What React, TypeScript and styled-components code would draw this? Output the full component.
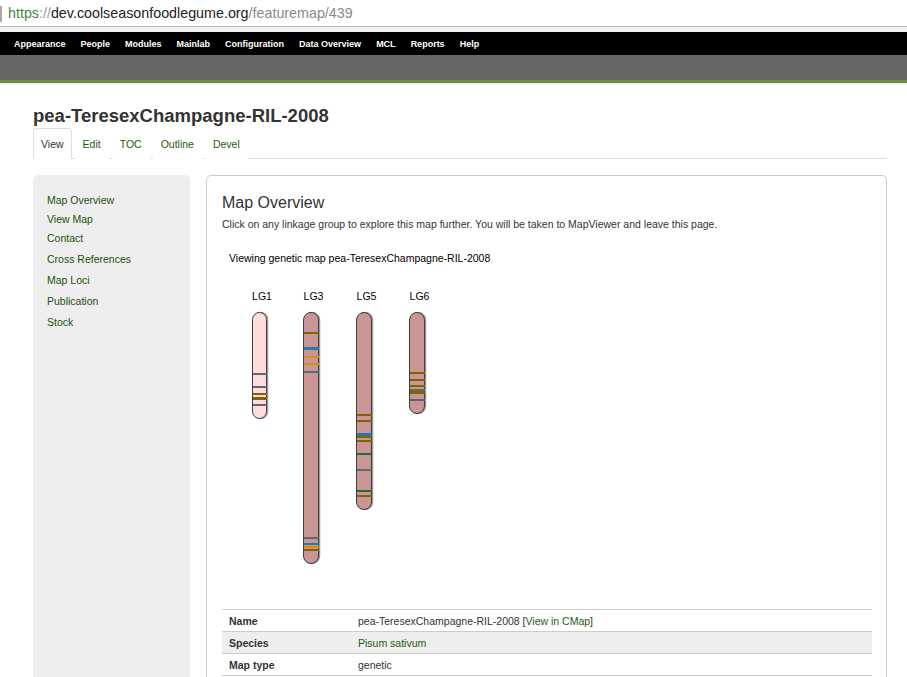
import React from "react";
import styled, { createGlobalStyle } from "styled-components";

const Global = createGlobalStyle`
  html, body { margin: 0; padding: 0; background: #fff; }
  body { font-family: "Liberation Sans", Arial, sans-serif; color: #333; }
`;

const UrlBar = styled.div`
  height: 26px;
  display: flex;
  align-items: center;
  border-bottom: 1px solid #b8b8b8;
  font-size: 14.3px;
  position: relative;
  padding-left: 8px;
  white-space: nowrap;
`;
const Caret = styled.span`
  position: absolute;
  left: 0;
  top: 6px;
  width: 2px;
  height: 16px;
  background: #aaa;
`;
const UrlPart = styled.span<{ $c: string }>`
  color: ${(p) => p.$c};
`;
const Spacer = styled.div`
  height: 5px;
  background: #f1f1f1;
`;
const NavBar = styled.nav`
  height: 23px;
  background: #000;
  display: flex;
  align-items: center;
  gap: 15px;
  padding-left: 14px;
`;
const NavItem = styled.span`
  color: #fff;
  font-weight: bold;
  font-size: 9px;
`;
const GrayBand = styled.div`
  height: 25px;
  background: #666;
  border-bottom: 3px solid #738a43;
`;
const FaintLine = styled.div`
  height: 1px;
  background: #e6e6e6;
`;
const Page = styled.div`
  padding: 0 20px 0 33px;
`;
const Title = styled.h1`
  margin: 0;
  padding-top: 20px;
  height: 23px;
  font-size: 18.5px;
  line-height: 23px;
  font-weight: bold;
  color: #333;
`;
const Tabs = styled.div`
  margin-top: 1px;
  display: flex;
  border-bottom: 1px solid #ddd;
  height: 30px;
`;
const Tab = styled.a<{ $active?: boolean }>`
  display: flex;
  align-items: center;
  padding: 0 7px;
  margin-right: 3px;
  font-size: 10.5px;
  color: ${(p) => (p.$active ? "#333" : "#1f5a10")};
  border: 1px solid ${(p) => (p.$active ? "#ddd" : "transparent")};
  border-bottom: none;
  border-radius: 4px 4px 0 0;
  background: #fff;
  height: 31px;
  box-sizing: border-box;
  text-decoration: none;
`;
const Body = styled.div`
  display: flex;
  gap: 16px;
  margin-top: 16px;
  align-items: flex-start;
`;
const Sidebar = styled.aside`
  width: 157px;
  flex-shrink: 0;
  background: #eee;
  border-radius: 5px 5px 0 0;
  height: 520px;
  padding: 16px 0 0 14px;
  box-sizing: border-box;
`;
const SideLink = styled.a<{ $spaced?: boolean }>`
  display: block;
  font-size: 10.5px;
  line-height: 19px;
  margin-top: ${(p) => (p.$spaced ? "2px" : "0")};
  color: #254f0d;
  text-decoration: none;
`;
const Panel = styled.section`
  flex: 1;
  border: 1px solid #ccc;
  border-radius: 5px;
  padding: 17px 14px 0 15px;
  min-height: 520px;
  box-sizing: border-box;
`;
const PanelTitle = styled.h2`
  margin: 0;
  font-size: 16px;
  line-height: 19px;
  font-weight: normal;
  color: #333;
`;
const Desc = styled.p`
  margin: 5px 0 0;
  font-size: 10.5px;
  line-height: 14px;
  color: #333;
`;
const Viewing = styled.p`
  margin: 20px 0 0 7px;
  font-size: 10.5px;
  line-height: 14px;
  color: #000;
`;
const MapSvg = styled.svg`
  display: block;
  margin: 26px 0 0 7px;
`;
const Table = styled.table`
  margin-top: 43px;
  width: 100%;
  border-collapse: collapse;
  font-size: 10.5px;
`;
const Row = styled.tr<{ $shade?: boolean }>`
  background: ${(p) => (p.$shade ? "#eee" : "#fff")};
  border-top: 1px solid #ccc;
  border-bottom: 1px solid #ccc;
`;
const Th = styled.th`
  text-align: left;
  font-weight: bold;
  color: #333;
  width: 115px;
  padding: 0 7px;
  height: 21px;
`;
const Td = styled.td`
  color: #333;
  padding: 0 7px;
`;
const Link = styled.a`
  color: #1f5a10;
  text-decoration: none;
`;

const C = {
  olive: "#7e6500",
  blue: "#2878a6",
  orange: "#d98b14",
  gray: "#5d6877",
  green: "#246a40",
};

type Band = { y: number; c: string; h?: number };
type Chrom = { name: string; x: number; w: number; top: number; bottom: number; fill: string; bands: Band[] };

const chroms: Chrom[] = [
  {
    name: "LG1", x: 23, w: 14, top: 21, bottom: 127, fill: "#fedcdc",
    bands: [
      { y: 83, c: C.gray }, { y: 96, c: C.gray }, { y: 103, c: C.olive },
      { y: 107, c: C.olive, h: 3 }, { y: 114, c: C.gray },
    ],
  },
  {
    name: "LG3", x: 74, w: 15, top: 21, bottom: 272, fill: "#c99595",
    bands: [
      { y: 42, c: C.olive }, { y: 57, c: C.blue, h: 3 }, { y: 66, c: C.orange },
      { y: 73, c: C.orange }, { y: 81, c: C.gray }, { y: 247, c: C.gray },
      { y: 253, c: C.blue }, { y: 256, c: C.orange }, { y: 259, c: C.olive },
    ],
  },
  {
    name: "LG5", x: 127, w: 15, top: 21, bottom: 218, fill: "#c99595",
    bands: [
      { y: 124, c: C.olive }, { y: 130, c: C.olive }, { y: 143, c: C.blue, h: 3 },
      { y: 146, c: C.olive }, { y: 150, c: C.olive }, { y: 163, c: C.green },
      { y: 179, c: C.gray }, { y: 200, c: C.green }, { y: 205, c: C.olive },
    ],
  },
  {
    name: "LG6", x: 180, w: 15, top: 21, bottom: 122, fill: "#c99595",
    bands: [
      { y: 82, c: C.olive }, { y: 89, c: C.olive }, { y: 95, c: C.olive },
      { y: 99, c: C.gray }, { y: 101, c: C.olive, h: 3 }, { y: 109, c: C.gray },
    ],
  },
];

function GeneticMap() {
  return (
    <MapSvg width={220} height={275} viewBox="0 0 220 275">
      {chroms.map((ch) => {
        const h = ch.bottom - ch.top;
        const r = ch.w / 2;
        return (
          <g key={ch.name}>
            <text
              x={ch.x + r + 3}
              y={9}
              textAnchor="middle"
              fontSize={10.5}
              fill="#000"
              fontFamily="Liberation Sans, Arial, sans-serif"
            >
              {ch.name}
            </text>
            <rect x={ch.x + 1.5} y={ch.top + 0.5} width={ch.w} height={h} rx={r} fill="none" stroke="#9a9a9a" strokeWidth={1.5} />
            <rect x={ch.x + 0.5} y={ch.top + 0.5} width={ch.w} height={h} rx={r} fill={ch.fill} stroke="#3e3e3e" strokeWidth={1} />
            {ch.bands.map((b, i) => (
              <rect key={i} x={ch.x + 1} y={b.y - 1} width={ch.w} height={b.h ?? 2} fill={b.c} />
            ))}
          </g>
        );
      })}
    </MapSvg>
  );
}

const navItems = ["Appearance", "People", "Modules", "Mainlab", "Configuration", "Data Overview", "MCL", "Reports", "Help"];
const sideLinks = ["Map Overview", "View Map", "Contact", "Cross References", "Map Loci", "Publication", "Stock"];

export default function App() {
  return (
    <>
      <Global />
      <UrlBar>
        <Caret />
        <UrlPart $c="#3b8a3b">https</UrlPart>
        <UrlPart $c="#999">://</UrlPart>
        <UrlPart $c="#222">dev.coolseasonfoodlegume.org</UrlPart>
        <UrlPart $c="#8a8a8a">/featuremap/439</UrlPart>
      </UrlBar>
      <Spacer />
      <NavBar>
        {navItems.map((n) => (
          <NavItem key={n}>{n}</NavItem>
        ))}
      </NavBar>
      <GrayBand />
      <FaintLine />
      <Page>
        <Title>pea-TeresexChampagne-RIL-2008</Title>
        <Tabs>
          <Tab $active>View</Tab>
          <Tab>Edit</Tab>
          <Tab>TOC</Tab>
          <Tab>Outline</Tab>
          <Tab>Devel</Tab>
        </Tabs>
        <Body>
          <Sidebar>
            {sideLinks.map((s, i) => (
              <SideLink key={s} $spaced={i >= 3}>
                {s}
              </SideLink>
            ))}
          </Sidebar>
          <Panel>
            <PanelTitle>Map Overview</PanelTitle>
            <Desc>
              Click on any linkage group to explore this map further. You will be taken to MapViewer and leave this page.
            </Desc>
            <Viewing>Viewing genetic map pea-TeresexChampagne-RIL-2008</Viewing>
            <GeneticMap />
            <Table>
              <tbody>
                <Row>
                  <Th>Name</Th>
                  <Td>
                    pea-TeresexChampagne-RIL-2008 [<Link>View in CMap</Link>]
                  </Td>
                </Row>
                <Row $shade>
                  <Th>Species</Th>
                  <Td>
                    <Link>Pisum sativum</Link>
                  </Td>
                </Row>
                <Row>
                  <Th>Map type</Th>
                  <Td>genetic</Td>
                </Row>
              </tbody>
            </Table>
          </Panel>
        </Body>
      </Page>
    </>
  );
}
